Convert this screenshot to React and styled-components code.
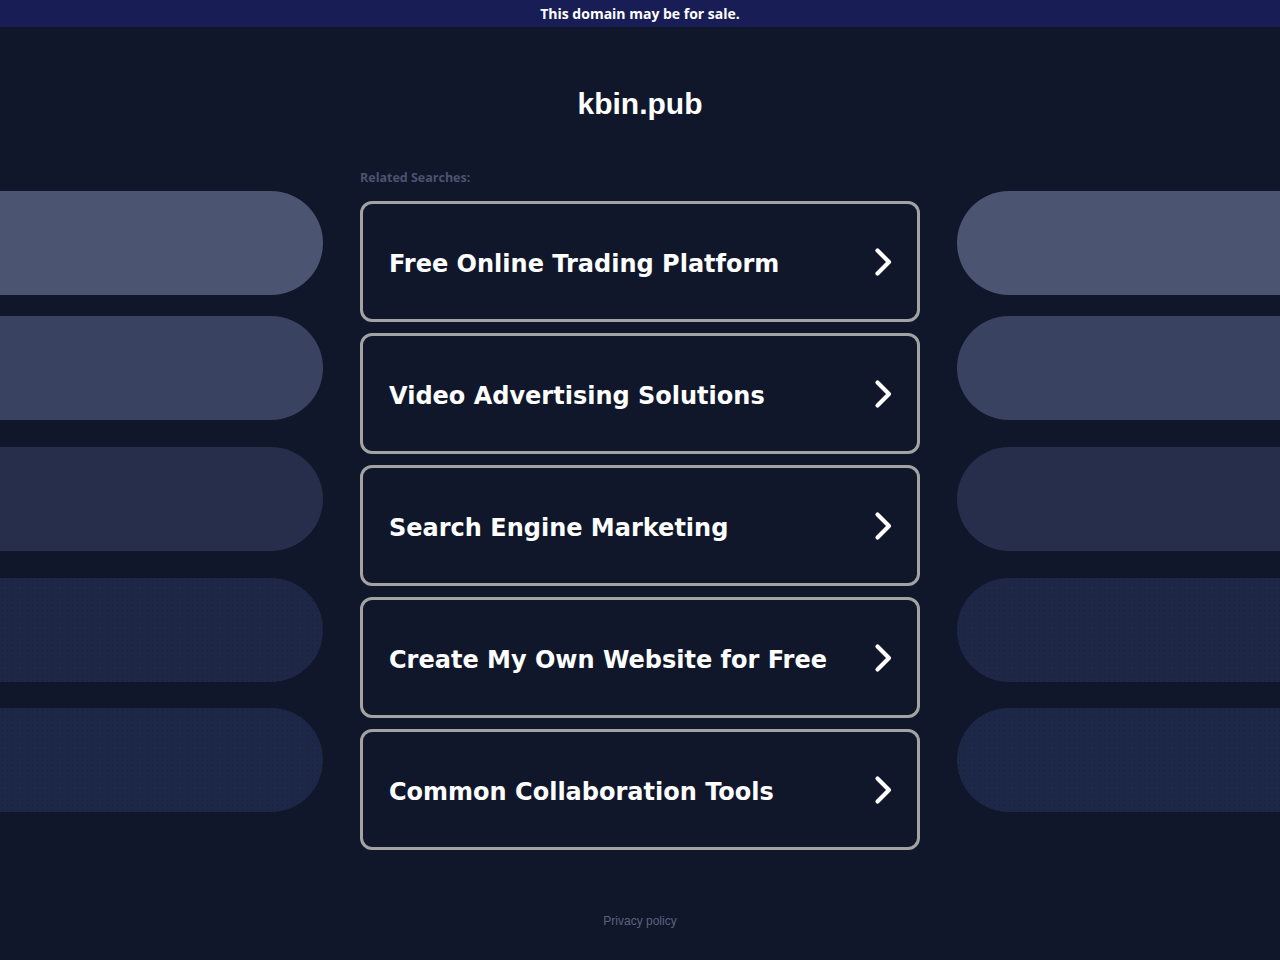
import React from "react";
import styled, { createGlobalStyle } from "styled-components";

const GlobalStyle = createGlobalStyle`
  html, body {
    margin: 0;
    padding: 0;
    background: #11172b;
  }
  body {
    font-family: "Liberation Sans", Arial, sans-serif;
    color: #fff;
  }
`;

const TopBar = styled.div`
  height: 27px;
  background: #191d55;
  display: flex;
  align-items: center;
  justify-content: center;
  font-family: "Open Sans", "Liberation Sans", sans-serif;
  font-weight: 700;
  font-size: 14px;
  color: #fff;
`;

const Title = styled.h1`
  margin: 59px 0 0;
  text-align: center;
  font-family: "Liberation Sans", Arial, sans-serif;
  font-weight: 700;
  font-size: 30px;
  line-height: 36px;
  color: #fff;
`;

const Grid = styled.div`
  display: grid;
  grid-template-columns: 1fr 560px 1fr;
  column-gap: 37px;
  margin-top: 47px;
`;

const Side = styled.div`
  display: flex;
  flex-direction: column;
  padding-top: 22px;
`;

const Pill = styled.div`
  height: 104px;
  margin-top: ${(p) => p.$gap}px;
  background-color: ${(p) => p.$color};
  border-radius: ${(p) => (p.$side === "left" ? "0 52px 52px 0" : "52px 0 0 52px")};
  ${(p) =>
    p.$dots &&
    `background-image: radial-gradient(rgba(10, 16, 36, 0.35) 0.7px, transparent 0.9px);
     background-size: 5px 5px;`}
`;

const Center = styled.div`
  display: flex;
  flex-direction: column;
`;

const Label = styled.div`
  font-family: "Open Sans", "Liberation Sans", sans-serif;
  font-size: 12.5px;
  font-weight: 700;
  line-height: 16px;
  padding-top: 1px;
  color: #4a536f;
  margin-bottom: 15px;
`;

const Cards = styled.div`
  display: flex;
  flex-direction: column;
  gap: 11px;
`;

const Card = styled.a`
  box-sizing: border-box;
  height: 121px;
  border: 3px solid #a3a3a3;
  border-radius: 12px;
  display: flex;
  align-items: center;
  justify-content: space-between;
  padding: 5px 24px 0 26px;
  color: #fff;
  text-decoration: none;
  font-family: "DejaVu Sans", Verdana, sans-serif;
  font-weight: 700;
  font-size: 24px;
  cursor: pointer;
`;

const Footer = styled.div`
  margin-top: 64px;
  text-align: center;
  font-family: "Liberation Sans", Arial, sans-serif;
  font-size: 12px;
  color: #5a627c;
`;

const Chevron = () => (
  <svg width="20" height="30" viewBox="0 0 20 30" fill="none" style={{ marginTop: -5 }}>
    <path
      d="M4.5 3.5 L16 15 L4.5 26.5"
      stroke="#fff"
      strokeWidth="4.2"
      strokeLinecap="round"
      strokeLinejoin="round"
    />
  </svg>
);

const searches = [
  "Free Online Trading Platform",
  "Video Advertising Solutions",
  "Search Engine Marketing",
  "Create My Own Website for Free",
  "Common Collaboration Tools",
];

const pills = [
  { color: "#4b5572", gap: 0 },
  { color: "#394261", gap: 21 },
  { color: "#262e4b", gap: 27 },
  { color: "#1e2746", gap: 27, dots: true },
  { color: "#1d2747", gap: 26, dots: true },
];

export default function App() {
  return (
    <>
      <GlobalStyle />
      <TopBar>This domain may be for sale.</TopBar>
      <Title>kbin.pub</Title>
      <Grid>
        <Side>
          {pills.map((p, i) => (
            <Pill key={i} $side="left" $color={p.color} $gap={p.gap} $dots={p.dots} />
          ))}
        </Side>
        <Center>
          <Label>Related Searches:</Label>
          <Cards>
            {searches.map((s) => (
              <Card key={s}>
                <span>{s}</span>
                <Chevron />
              </Card>
            ))}
          </Cards>
        </Center>
        <Side>
          {pills.map((p, i) => (
            <Pill key={i} $side="right" $color={p.color} $gap={p.gap} $dots={p.dots} />
          ))}
        </Side>
      </Grid>
      <Footer>Privacy policy</Footer>
    </>
  );
}
